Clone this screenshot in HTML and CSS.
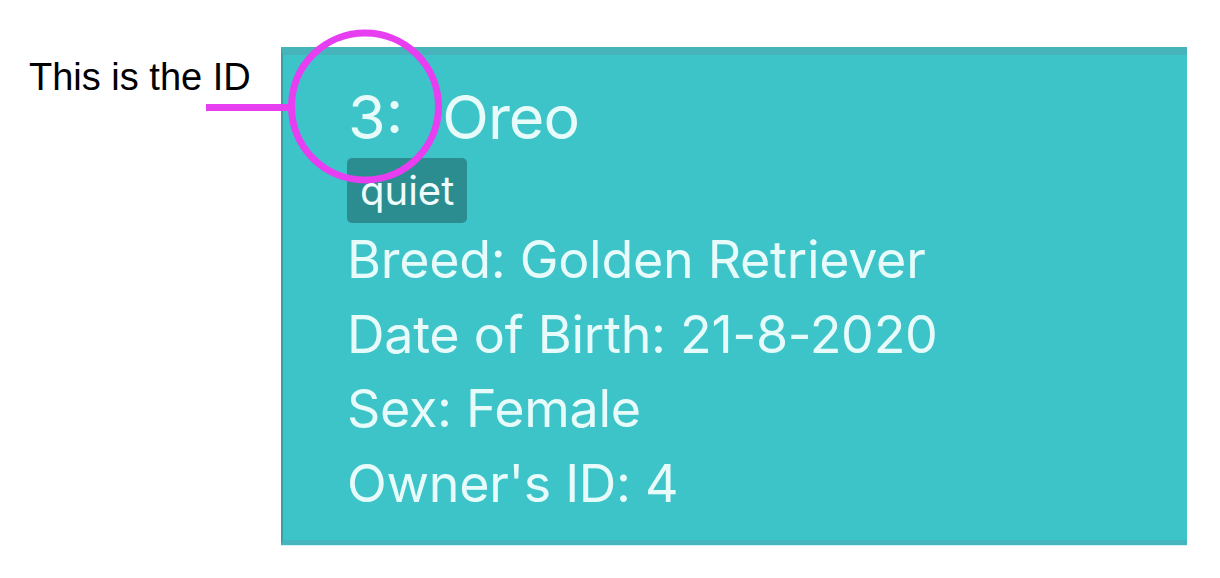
FILE: index.html
```html
<!DOCTYPE html>
<html>
<head>
<meta charset="utf-8">
<link rel="stylesheet" href="styles.css">
</head>
<body>
<div class="page">
  <div class="note">This is the ID</div>
  <div class="card">
    <div class="title"><span class="id">3:</span><span class="name">Oreo</span></div>
    <div class="tags"><span class="tag">quiet</span></div>
    <div class="field">Breed: Golden Retriever</div>
    <div class="field">Date of Birth: 21-8-2020</div>
    <div class="field">Sex: Female</div>
    <div class="field">Owner's ID: 4</div>
  </div>
  <svg class="overlay" width="1220" height="578" viewBox="0 0 1220 578">
    <line x1="206" y1="107.5" x2="292" y2="107.5" stroke="#e83ef2" stroke-width="7"/>
    <circle cx="365" cy="106.5" r="73.5" fill="none" stroke="#e83ef2" stroke-width="7"/>
  </svg>
</div>
</body>
</html>
```
FILE: styles.css
```css
html, body {
  margin: 0;
  padding: 0;
  background: #ffffff;
}
.page {
  position: relative;
  width: 1220px;
  height: 578px;
  display: flex;
  align-items: flex-start;
  overflow: hidden;
}
.note {
  flex: 0 0 281px;
  box-sizing: border-box;
  padding-left: 29px;
  margin-top: 58px;
  font-family: "Liberation Sans", Arial, sans-serif;
  font-size: 38px;
  line-height: 38px;
  color: #000;
  white-space: nowrap;
}
.card {
  flex: 0 0 906px;
  box-sizing: border-box;
  height: 498px;
  margin-top: 47px;
  background: #3cc4c8;
  border-top: 8px solid #47b4bc;
  border-left: 2px solid #3a9ea3;
  border-bottom: 5px solid #45b6bd;
  box-shadow: 0 1px 0 #d2f2f3;
  padding: 31px 0 0 64px;
  display: flex;
  flex-direction: column;
  align-items: flex-start;
  font-family: Inter, Roboto, "Noto Sans", sans-serif;
  color: #e8fbfb;
}
.title {
  display: flex;
  gap: 39px;
  font-size: 61px;
  line-height: 63px;
  margin-left: 1px;
}
.name {
  letter-spacing: -1px;
}
.tags {
  margin-top: 9px;
  display: flex;
}
.tag {
  display: block;
  background: #2b8d8f;
  border-radius: 5px;
  font-size: 40px;
  line-height: 65px;
  height: 65px;
  padding: 0 13px 0 13px;
  color: #eefcfc;
}
.field {
  font-size: 52px;
  line-height: 74.7px;
  letter-spacing: -0.3px;
  white-space: nowrap;
}
.overlay {
  position: absolute;
  left: 0;
  top: 0;
  pointer-events: none;
}
```
